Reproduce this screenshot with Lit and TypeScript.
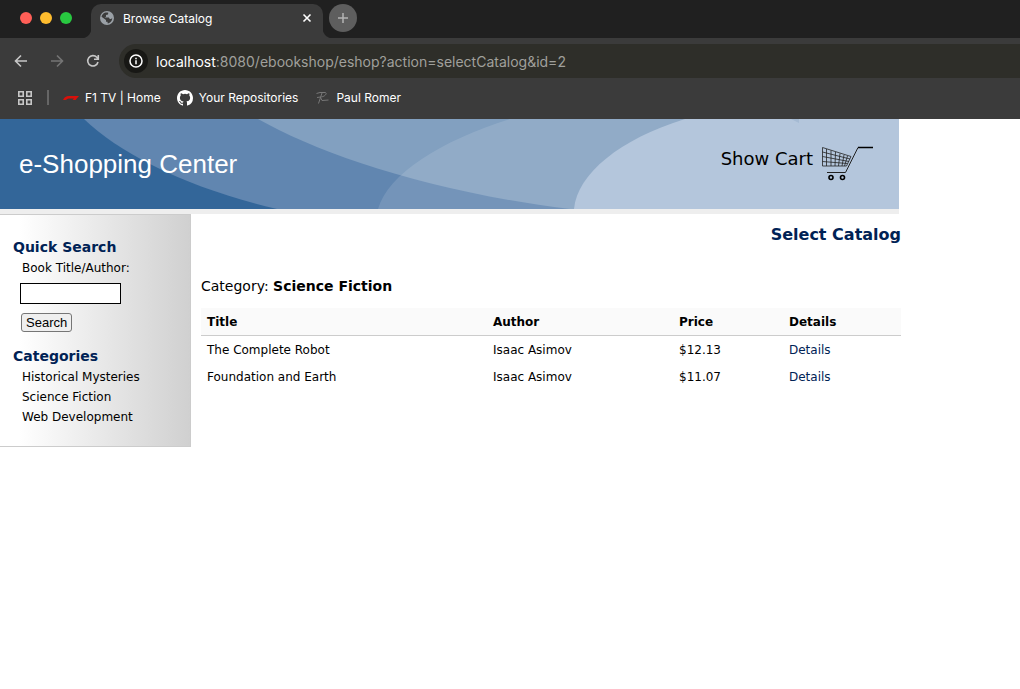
import { LitElement, html, css } from "lit";
import { customElement, state } from "lit/decorators.js";

@customElement("browser-chrome")
class BrowserChrome extends LitElement {
  static styles = css`
    :host { display: block; background: #3b3b3b; color: #fff; font-family: Inter, sans-serif; }
    svg { display: block; flex: none; }
    button { display: grid; place-items: center; padding: 0; border: 0; background: none; color: inherit; }
    .strip { display: flex; height: 38px; background: #202020; }
    .lights { display: flex; gap: 8px; padding: 12px 18px 0 20px; }
    .light { width: 12px; height: 12px; border-radius: 50%; }
    .red { background: #ff5f57; }
    .amber { background: #febc2e; }
    .green { background: #28c840; }
    .tab { position: relative; display: flex; align-items: center; width: 232px; height: 34px; margin: 4px 0 0 1px; padding: 0 10px 6px 9px; box-sizing: border-box; border-radius: 10px 10px 0 0; background: #3b3b3b; font-size: 12px; font-weight: 400; }
    .tab::before, .tab::after { content: ""; position: absolute; bottom: 0; width: 10px; height: 10px; }
    .tab::before { right: 100%; background: radial-gradient(circle at 0 0, #202020 10px, #3b3b3b 11px); }
    .tab::after { left: 100%; background: radial-gradient(circle at 100% 0, #202020 10px, #3b3b3b 11px); }
    .label { flex: 1; margin-left: 9px; }
    .plus { width: 28px; height: 28px; margin: 0; border-radius: 50%; background: #5e5e5e; color: #b4b4b4; }
    .new { padding: 4px 0 0 6px; }
    .bar { display: flex; align-items: center; height: 46px; padding-left: 13px; color: #c7c7c7; }
    .bar > button { width: 16px; height: 16px; margin-right: 20px; }
    .bar > .dim { color: #757575; }
    .omni { display: flex; align-items: center; flex: 1; height: 34px; padding-left: 5px; border-radius: 17px 0 0 17px; background: #2e2e29; }
    .bar > .omni { margin-left: -2px; }
    .info { width: 24px; height: 24px; border-radius: 50%; background: #181815; color: #fff; }
    .url { margin-left: 8px; font-size: 14px; color: #a0a09c; }
    .url b { font-weight: 400; color: #fff; }
    .marks { display: flex; align-items: center; height: 35px; padding: 0 18px 8px; box-sizing: border-box; font-size: 12px; font-weight: 400; }
    .marks a { display: flex; align-items: center; gap: 6px; margin-right: 16px; color: #fff; text-decoration: none; white-space: nowrap; }
    .rule { width: 2px; height: 15px; margin: 0 15px; background: #666; }
    .marks .rule + a { margin-left: -1px; }
  `;

  render() {
    return html`
      <div class="strip">
        <div class="lights"><span class="light red"></span><span class="light amber"></span><span class="light green"></span></div>
        <div class="tab">
          <svg width="14" height="14" viewBox="0 0 14 14"><circle cx="7" cy="7" r="7" fill="#9aa0a6"/><path d="M5.500 1.500c1-.2 2-.1 2.800.2L8 3.400 6 4v1.700L4.500 6.500h4.300l1 1.500h1.400l1-1.200c.2 3-1.800 5.300-4.500 5.700L7.500 10.800H6V9L1.500 5.800C2 3.400 3.500 2 5.500 1.500z" fill="#3b3b3b"/></svg>
          <span class="label">Browse Catalog</span>
          <button aria-label="Close tab"><svg width="12" height="12" viewBox="0 0 12 12"><path d="M2.500 2.500l7 7m0-7l-7 7" stroke="#fff" stroke-width="1.600"/></svg></button>
        </div>
        <div class="new"><button class="plus" aria-label="New tab"><svg width="12" height="12" viewBox="0 0 12 12"><path d="M6 1v10M1 6h10" stroke="currentColor" stroke-width="1.500"/></svg></button></div>
      </div>
      <div class="bar">
        <button aria-label="Back"><svg width="16" height="16" viewBox="0 0 16 16" fill="none" stroke="currentColor" stroke-width="1.600"><path d="M14 8H3M8 2.500L2.500 8 8 13.500"/></svg></button>
        <button class="dim" aria-label="Forward"><svg width="16" height="16" viewBox="0 0 16 16" fill="none" stroke="currentColor" stroke-width="1.600"><path d="M2 8h11M8 2.500L13.500 8 8 13.500"/></svg></button>
        <button aria-label="Reload"><svg width="16" height="16" viewBox="0 0 16 16" fill="none" stroke="currentColor" stroke-width="1.600"><path d="M13 9a5.200 5.200 0 1 1-1.200-4.700L13.300 6M13.300 2v4.300H9"/></svg></button>
        <div class="omni">
          <button class="info" aria-label="Site information"><svg width="14" height="14" viewBox="0 0 14 14" fill="none" stroke="currentColor" stroke-width="1.500"><circle cx="7" cy="7" r="6"/><path d="M7 6.200v4M7 3.700v1.500"/></svg></button>
          <span class="url"><b>localhost</b>:8080/ebookshop/eshop?action=selectCatalog&amp;id=2</span>
        </div>
      </div>
      <nav class="marks">
        <svg width="14" height="14" viewBox="0 0 14 14" fill="none" stroke="#c7c7c7" stroke-width="1.600"><path d="M.8.8h4.400v4.400H.8zM8.800.8h4.400v4.400H8.800zM.8 8.800h4.400v4.400H.8zM8.800 8.800h4.400v4.400H8.800z"/></svg>
        <span class="rule"></span>
        <a href="#"><svg width="16" height="16" viewBox="0 0 16 16"><path d="M0 10c1.500-3 3-4 6-4h10l-3.500 4H9.500L11 8.500H6C4 8.500 3.500 10 2.800 10z" fill="#d9100a"/></svg>F1 TV | Home</a>
        <a href="#"><svg width="16" height="16" viewBox="0 0 16 16"><path fill="#fff" d="M8 0C3.580 0 0 3.580 0 8c0 3.540 2.290 6.530 5.470 7.590.4.070.55-.17.55-.38 0-.19-.01-.82-.01-1.490-2.010.37-2.530-.49-2.690-.94-.09-.23-.48-.94-.82-1.130-.28-.15-.68-.52-.01-.53.63-.01 1.080.58 1.230.82.72 1.210 1.870.87 2.330.66.07-.52.28-.87.51-1.070-1.780-.2-3.640-.89-3.640-3.950 0-.87.31-1.590.82-2.150-.08-.2-.36-1.020.08-2.120 0 0 .67-.21 2.200.82a7.600 7.600 0 0 1 4 0c1.530-1.040 2.200-.82 2.200-.82.44 1.100.16 1.920.08 2.120.51.56.82 1.270.82 2.150 0 3.070-1.870 3.750-3.650 3.950.29.25.54.73.54 1.480 0 1.070-.01 1.930-.01 2.200 0 .21.15.46.55.38A8 8 0 0 0 16 8c0-4.420-3.580-8-8-8z"/></svg>Your Repositories</a>
        <a href="#"><svg width="16" height="16" viewBox="0 0 16 16" fill="none" stroke="#777"><path d="M2.500 3.500L6 2.500h5.500c2 1-1 4.500-5 4.500L3 7.500M8 3L4.500 13.500M6.500 7.500l1.500 3 6.500-.5"/></svg>Paul Romer</a>
      </nav>`;
  }
}

@customElement("shop-banner")
class ShopBanner extends LitElement {
  static styles = css`
    :host { display: block; border-bottom: 5px solid #eee; }
    .banner { display: grid; height: 90px; }
    .art, .row { grid-area: 1 / 1; width: 100%; height: 100%; min-width: 0; }
    .row { z-index: 1; display: flex; align-items: center; justify-content: space-between; padding: 0 26px 0 19px; box-sizing: border-box; }
    h1 { margin: 0; color: #fff; font: 400 26px "Liberation Sans", sans-serif; }
    a { display: flex; align-items: center; gap: 9px; color: #000; text-decoration: none; font: 18px "DejaVu Sans", sans-serif; padding-bottom: 12px; }
    .cart { margin-top: 12px; }
  `;

  render() {
    return html`
      <header class="banner">
        <svg class="art" viewBox="0 0 899 90" preserveAspectRatio="none" aria-hidden="true">
          <path fill="#336699" d="M0 0h899v90H0z"/>
          <path fill="#6186b0" d="M84 0C120 35 190 70 277 90H899V0z"/>
          <path fill="#82a0c0" d="M258 0C320 35 430 73 570 90H899V0z"/>
          <path fill="#fff" fill-opacity=".12" d="M378 90C388 55 440 22 510 0H899V90z"/>
          <path fill="#b4c6dc" d="M574 90C577 55 620 20 685 0H899V90z"/>
          <path fill="#a5bad3" d="M791 0h8v4z"/>
        </svg>
        <div class="row">
          <h1>e-Shopping Center</h1>
          <a href="#">Show Cart
            <svg class="cart" width="51" height="36" viewBox="0 0 51 36" fill="none" stroke="#222">
              <path d="M.5 1.500L29 10.500 24.500 20H.5zM.5 6L28 13M.5 10.500L27 15.500M.5 15.500l25 2M4.500 3v17M9 4.500V20M13.500 6L13 20M18 7.500L16.500 20M22 9l-2 11M25.500 10L22.500 20" stroke-width=".8"/>
              <path d="M5 26.500h18.500L36 1.500"/><path d="M36 1.500h15" stroke="#000" stroke-width="1.500"/>
              <circle cx="9" cy="31.500" r="2" stroke="#000" stroke-width="1.600"/><circle cx="20.500" cy="31.500" r="2" stroke="#000" stroke-width="1.600"/>
            </svg>
          </a>
        </div>
      </header>`;
  }
}

@customElement("shop-sidebar")
class ShopSidebar extends LitElement {
  static styles = css`
    :host { display: block; box-sizing: border-box; padding: 23px 12px 19px 13px; border: 1px solid #ccc; border-left: 0; background: linear-gradient(to right, #fff 10%, #d0d0d0); font: 12px/20px "DejaVu Sans", sans-serif; }
    h2 { margin: 0; color: #002255; font-size: 14px; line-height: 18px; }
    form { display: flex; flex-direction: column; align-items: flex-start; padding: 0 7px; margin: 0 0 15px; }
    label { margin: 2px 0 5px 2px; }
    input { width: 101px; height: 21px; box-sizing: border-box; border: 1px solid #000; background: #fff; padding: 1px 3px; }
    button { height: 19px; margin: 9px 0 0 1px; padding: 0 4px; border: 1px solid #767676; border-radius: 3px; background: #efefef; color: #000; font: 13px/15px "Liberation Sans", sans-serif; }
    ul { margin: 2px 0 0; padding: 0 0 0 9px; list-style: none; }
    a { color: #000; text-decoration: none; }
  `;

  render() {
    const categories = ["Historical Mysteries", "Science Fiction", "Web Development"];
    return html`
      <h2>Quick Search</h2>
      <form @submit=${(e: Event) => e.preventDefault()}>
        <label for="q">Book Title/Author:</label>
        <input id="q" type="text" />
        <button>Search</button>
      </form>
      <h2>Categories</h2>
      <ul>${categories.map((c) => html`<li><a href="#">${c}</a></li>`)}</ul>`;
  }
}

@customElement("app-root")
class AppRoot extends LitElement {
  static styles = css`
    :host { display: block; min-height: 100vh; background: #fff; color: #000; font: 12px/15px "DejaVu Sans", sans-serif; }
    shop-banner { max-width: 899px; }
    .page { display: grid; grid-template-columns: 191px minmax(0, 1fr); column-gap: 10px; align-items: start; max-width: 901px; }
    h2 { margin: 11px 0 31px; text-align: right; color: #002255; font-size: 16px; line-height: 20px; }
    p { margin: 0 0 12px; font-size: 14px; line-height: 20px; }
    table { width: 100%; border-collapse: collapse; table-layout: fixed; }
    th, td { padding: 6px; text-align: left; }
    th { padding: 7px 6px 5px; background: #fafafa; border-bottom: 1px solid #ccc; }
    .title { width: 274px; }
    .author { width: 174px; }
    .price { width: 98px; }
    tbody tr:first-child td { padding-top: 7px; }
    a { color: #002255; text-decoration: none; }
  `;

  @state() private books = [
    { title: "The Complete Robot", author: "Isaac Asimov", price: "$12.13" },
    { title: "Foundation and Earth", author: "Isaac Asimov", price: "$11.07" },
  ];

  render() {
    return html`
      <browser-chrome></browser-chrome>
      <shop-banner></shop-banner>
      <div class="page">
        <shop-sidebar></shop-sidebar>
        <main>
          <h2>Select Catalog</h2>
          <p>Category: <strong>Science Fiction</strong></p>
          <table>
            <thead><tr><th class="title">Title</th><th class="author">Author</th><th class="price">Price</th><th>Details</th></tr></thead>
            <tbody>${this.books.map((b) => html`<tr><td>${b.title}</td><td>${b.author}</td><td>${b.price}</td><td><a href="#">Details</a></td></tr>`)}</tbody>
          </table>
        </main>
      </div>`;
  }
}
